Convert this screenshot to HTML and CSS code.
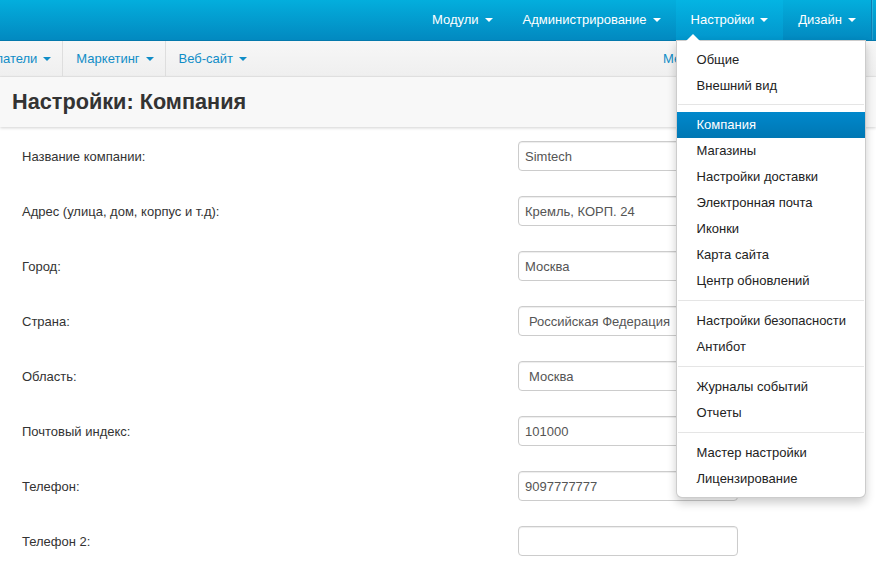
FILE: index.html
```html
<!DOCTYPE html>
<html lang="ru">
<head>
<meta charset="utf-8">
<title>Настройки: Компания</title>
<link rel="stylesheet" href="styles.css">
</head>
<body>
<header class="topbar">
  <ul class="topnav">
    <li class="topnav-item">Модули<span class="caret"></span></li>
    <li class="topnav-item">Администрирование<span class="caret"></span></li>
    <li class="topnav-item is-open">Настройки<span class="caret"></span>
      <ul class="dropdown">
        <li class="dd-item">Общие</li>
        <li class="dd-item">Внешний вид</li>
        <li class="dd-divider dd-divider-tight"></li>
        <li class="dd-item is-active">Компания</li>
        <li class="dd-item">Магазины</li>
        <li class="dd-item">Настройки доставки</li>
        <li class="dd-item">Электронная почта</li>
        <li class="dd-item">Иконки</li>
        <li class="dd-item">Карта сайта</li>
        <li class="dd-item">Центр обновлений</li>
        <li class="dd-divider"></li>
        <li class="dd-item">Настройки безопасности</li>
        <li class="dd-item">Антибот</li>
        <li class="dd-divider"></li>
        <li class="dd-item">Журналы событий</li>
        <li class="dd-item">Отчеты</li>
        <li class="dd-divider"></li>
        <li class="dd-item">Мастер настройки</li>
        <li class="dd-item">Лицензирование</li>
      </ul>
    </li>
    <li class="topnav-item">Дизайн<span class="caret"></span></li>
  </ul>
  <div class="topbar-end"></div>
</header>

<nav class="subbar">
  <ul class="subnav">
    <li class="subnav-item">Покупатели<span class="caret"></span></li>
    <li class="subnav-item">Маркетинг<span class="caret"></span></li>
    <li class="subnav-item">Веб-сайт<span class="caret"></span></li>
  </ul>
  <ul class="subnav subnav-right">
    <li class="subnav-item">Меню<span class="caret"></span></li>
  </ul>
</nav>

<div class="page-head">
  <h1 class="page-title">Настройки: Компания</h1>
</div>

<form class="form">
  <div class="row"><label class="label">Название компании:</label><input class="field" type="text" value="Simtech"></div>
  <div class="row"><label class="label">Адрес (улица, дом, корпус и т.д):</label><input class="field" type="text" value="Кремль, КОРП. 24"></div>
  <div class="row"><label class="label">Город:</label><input class="field" type="text" value="Москва"></div>
  <div class="row"><label class="label">Страна:</label><select class="field field-select"><option>Российская Федерация</option></select></div>
  <div class="row"><label class="label">Область:</label><select class="field field-select"><option>Москва</option></select></div>
  <div class="row"><label class="label">Почтовый индекс:</label><input class="field" type="text" value="101000"></div>
  <div class="row"><label class="label">Телефон:</label><input class="field" type="text" value="9097777777"></div>
  <div class="row"><label class="label">Телефон 2:</label><input class="field" type="text" value=""></div>
</form>
</body>
</html>
```

FILE: styles.css
```css
* { box-sizing: border-box; }
html, body { margin: 0; padding: 0; }
body {
  font-family: "Liberation Sans", Arial, sans-serif;
  font-size: 13px;
  color: #333;
  background: #fff;
  overflow: hidden;
  width: 876px;
  height: 575px;
}
ul { list-style: none; margin: 0; padding: 0; }

.caret {
  display: inline-block;
  width: 0;
  height: 0;
  margin-left: 6px;
  vertical-align: middle;
  border-top: 4px solid currentColor;
  border-left: 4px solid transparent;
  border-right: 4px solid transparent;
  position: relative;
  top: -1px;
}

/* top bar */
.topbar {
  display: flex;
  justify-content: flex-end;
  height: 41px;
  background: linear-gradient(to bottom, #03aedd 0%, #0289c0 100%);
  border-bottom: 1px solid #0479ac;
}
.topnav { display: flex; height: 40px; }
.topnav-item {
  position: relative;
  padding: 0 15px;
  line-height: 40px;
  color: #fff;
  white-space: nowrap;
}
.topnav-item.is-open {
  background: linear-gradient(to bottom, #04b4e3 0%, #0296cc 100%);
}
.topbar-end {
  width: 5px;
  border-left: 1px solid #0a7fb3;
  box-shadow: inset 1px 0 0 rgba(255,255,255,0.15);
}

/* dropdown */
.dropdown {
  position: absolute;
  top: 40px;
  left: 0;
  width: 190px;
  z-index: 10;
  padding: 6px 0 5px;
  background: #fff;
  border: 1px solid rgba(0,0,0,0.2);
  border-radius: 0 0 6px 6px;
  box-shadow: 0 5px 10px rgba(0,0,0,0.2);
  line-height: 20px;
  color: #222;
}
.dropdown::before {
  content: "";
  position: absolute;
  top: -7px;
  left: 9px;
  border-left: 7px solid transparent;
  border-right: 7px solid transparent;
  border-bottom: 7px solid #fff;
}
.dd-item {
  padding: 3px 20px;
  white-space: nowrap;
}
.dd-item.is-active {
  color: #fff;
  background: linear-gradient(to bottom, #0088cc 0%, #0077b3 100%);
}
.dd-divider {
  height: 1px;
  margin: 6px 1px 7px;
  background: #e5e5e5;
}
.dd-divider-tight { margin-top: 5px; }

/* sub bar */
.subbar {
  display: flex;
  justify-content: space-between;
  height: 36px;
  background: linear-gradient(to bottom, #f7f7f7 0%, #efefef 100%);
  border-bottom: 1px solid #e6e6e6;
}
.subnav { display: flex; margin-left: -46px; }
.subnav-right { margin-left: 0; width: 226px; }
.subnav-item {
  padding: 0 11px 0 13px;
  line-height: 35px;
  color: #108dc7;
  border-right: 1px solid #dedede;
  white-space: nowrap;
}
.subnav-item:last-child { border-right: 0; }

/* page head */
.page-head {
  height: 50px;
  display: flex;
  align-items: center;
  padding-left: 12px;
  background: #f8f8f8;
  box-shadow: 0 1px 3px rgba(0,0,0,0.18);
  position: relative;
}
.page-title {
  margin: 0;
  font-size: 21.7px;
  font-weight: bold;
  color: #333;
}

/* form */
.form {
  padding: 14px 0 0 22px;
}
.row {
  display: flex;
  align-items: center;
  height: 30px;
  margin-bottom: 25px;
}
.label {
  width: 496px;
  color: #333;
}
.field {
  width: 220px;
  height: 30px;
  padding: 4px 6px;
  font-family: "Liberation Sans", Arial, sans-serif;
  font-size: 13px;
  color: #555;
  background: #fff;
  border: 1px solid #ccc;
  border-radius: 4px;
  box-shadow: inset 0 1px 1px rgba(0,0,0,0.075);
  outline: none;
}
.field-select {
  -webkit-appearance: none;
  appearance: none;
  padding-left: 10px;
}
```
